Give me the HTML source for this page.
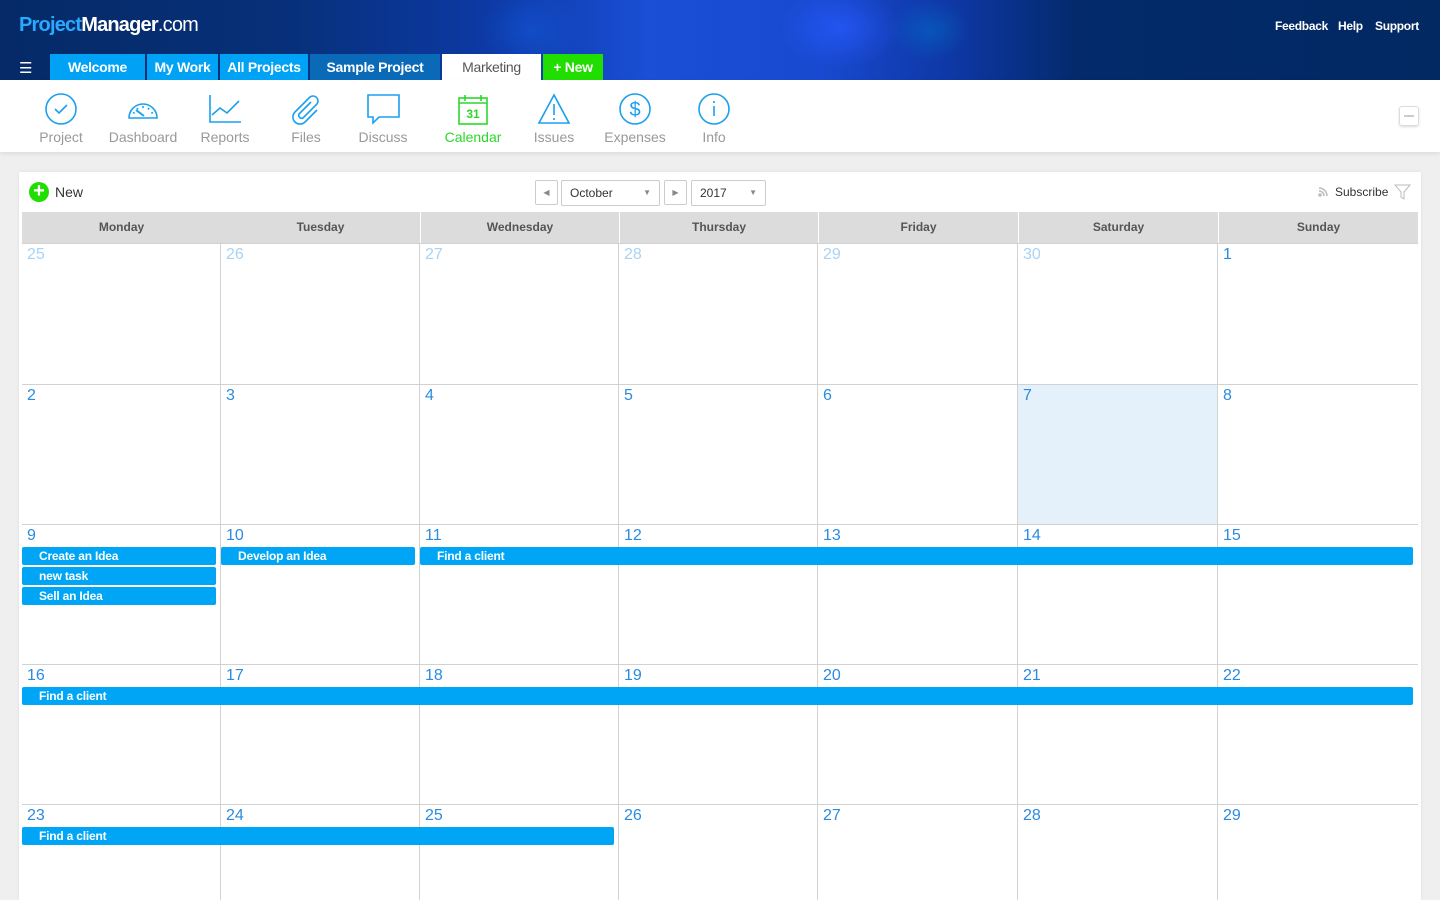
<!DOCTYPE html>
<html><head><meta charset="utf-8"><style>
*{margin:0;padding:0;box-sizing:border-box}
html,body{width:1440px;height:900px;overflow:hidden}
body{background:#efefef;font-family:"Liberation Sans",sans-serif;position:relative}
.a{position:absolute}
#hdr{left:0;top:0;width:1440px;height:80px;background:
radial-gradient(ellipse 60px 40px at 840px 28px,rgba(40,90,255,.7),transparent),
radial-gradient(ellipse 40px 30px at 930px 30px,rgba(0,110,200,.5),transparent),
radial-gradient(ellipse 50px 40px at 530px 30px,rgba(20,90,220,.5),transparent),
linear-gradient(90deg,#052a66 0%,#07307a 20%,#0d3aa8 35%,#1a4fd6 45%,#1849d0 57%,#0d36a0 67%,#032a6a 75%,#022962 100%)}
.tab{top:54px;height:26px;color:#fff;font-size:14px;font-weight:bold;text-align:center;line-height:26px;letter-spacing:-0.3px}
.tl{top:93px;width:80px;text-align:center}
.tl svg{display:block;margin:0 auto}
.tl div{font-size:14px;color:#999;margin-top:4px}
.dh{top:212px;height:31px;background:#dcdcdc;font-size:12px;font-weight:bold;color:#555;text-align:center;line-height:31px}
.cell{border-left:1px solid #d2d2d2;border-top:1px solid #d2d2d2}
.dn{font-size:16px;color:#2b8be0;padding:2px 0 0 5px}
.f .dn{color:#a9d3f4}
.ev{height:18px;background:#00a6f5;color:#fff;font-size:12px;font-weight:bold;line-height:18px;padding-left:17px;border-radius:2px;letter-spacing:-0.2px}
.hl{top:19px;font-size:12px;font-weight:bold;color:#fff;letter-spacing:-0.3px}
</style></head><body>
<div id="hdr" class="a"></div>
<div class="a" style="left:19px;top:14px;font-size:20px;font-weight:bold;letter-spacing:-0.8px;color:#fff"><span style="color:#2aa8ff">Project</span>Manager<span style="font-weight:normal">.com</span></div>
<div class="a hl" style="left:1275px">Feedback</div>
<div class="a hl" style="left:1338px">Help</div>
<div class="a hl" style="left:1375px">Support</div>
<div class="a" style="left:19px;top:59px;color:#fff;font-size:15px">&#9776;</div>
<div class="a tab" style="left:50px;width:95px;background:#00a2f5">Welcome</div>
<div class="a tab" style="left:147px;width:71px;background:#00a2f5">My Work</div>
<div class="a tab" style="left:220px;width:88px;background:#00a2f5">All Projects</div>
<div class="a tab" style="left:310px;width:130px;background:#0a6ab8">Sample Project</div>
<div class="a tab" style="left:442px;width:99px;background:#fff;color:#555;font-weight:normal">Marketing</div>
<div class="a tab" style="left:543px;width:60px;background:#22dd00">+ New</div>
<div class="a" style="left:0;top:80px;width:1440px;height:72px;background:#fff;box-shadow:0 2px 4px rgba(0,0,0,.08)"></div>
<div class="a tl" style="left:21px"><svg width="34" height="32" viewBox="0 0 34 32" fill="none" stroke="#1aa0ef" stroke-width="1.6"><circle cx="17" cy="16" r="15"/><path d="M11 16l4 4 8-8"/></svg><div>Project</div></div>
<div class="a tl" style="left:103px"><svg width="34" height="32" viewBox="0 0 34 32" fill="none" stroke="#1aa0ef" stroke-width="1.6"><path d="M3 25a14 14 0 0 1 28 0z"/><path d="M10 17l8 6" stroke-width="2"/><path d="M17 13v2M11 15l1 1.5M23 15l-1 1.5M7 19.5l1.7.7M27 19.5l-1.7.7"/></svg><div>Dashboard</div></div>
<div class="a tl" style="left:185px"><svg width="34" height="32" viewBox="0 0 34 32" fill="none" stroke="#1aa0ef" stroke-width="1.6"><path d="M2 2v27h31"/><path d="M4 22l8-7 7 5 12-12"/></svg><div>Reports</div></div>
<div class="a tl" style="left:266px"><svg width="34" height="32" viewBox="0 0 34 32" fill="none" stroke="#1aa0ef" stroke-width="1.6"><path d="M22 9L10 21a3 3 0 0 0 4 4L28 11a5 5 0 0 0-7-7L6 19a7 7 0 0 0 10 10l12-12"/></svg><div>Files</div></div>
<div class="a tl" style="left:343px"><svg width="34" height="32" viewBox="0 0 34 32" fill="none" stroke="#1aa0ef" stroke-width="1.6"><path d="M2 2h31v22H13l-6 6v-6H2z"/></svg><div>Discuss</div></div>
<div class="a tl" style="left:433px"><svg width="34" height="32" viewBox="0 0 34 32" fill="none" stroke="#2bd82b" stroke-width="1.6"><rect x="3" y="5" width="28" height="26"/><path d="M3 10h28M9 2v6M25 2v6"/><text x="17" y="25" text-anchor="middle" font-size="12" font-weight="bold" fill="#2bd82b" stroke="none" font-family="Liberation Sans">31</text></svg><div style="color:#2bd82b">Calendar</div></div>
<div class="a tl" style="left:514px"><svg width="34" height="32" viewBox="0 0 34 32" fill="none" stroke="#1aa0ef" stroke-width="1.6"><path d="M17 2L2 30h30z"/><path d="M17 11v11M17 25v2"/></svg><div>Issues</div></div>
<div class="a tl" style="left:595px"><svg width="34" height="32" viewBox="0 0 34 32" fill="none" stroke="#1aa0ef" stroke-width="1.6"><circle cx="17" cy="16" r="15"/><text x="17" y="23" text-anchor="middle" font-size="20" fill="#1aa0ef" stroke="none" font-family="Liberation Sans">$</text></svg><div>Expenses</div></div>
<div class="a tl" style="left:674px"><svg width="34" height="32" viewBox="0 0 34 32" fill="none" stroke="#1aa0ef" stroke-width="1.6"><circle cx="17" cy="16" r="15"/><path d="M17 13v10M17 8v2"/></svg><div>Info</div></div>
<div class="a" style="left:1399px;top:106px;width:20px;height:20px;border:1px solid #ddd;border-radius:3px;box-shadow:0 1px 2px rgba(0,0,0,.15)"><div style="margin:8px 4px;height:2px;background:#ccc"></div></div>
<div class="a" style="left:19px;top:172px;width:1402px;height:728px;background:#fff;box-shadow:0 0 3px rgba(0,0,0,.08)"></div>
<div class="a" style="left:29px;top:182px;width:20px;height:20px;border-radius:50%;background:#22dd00;color:#fff;font-size:20px;line-height:19px;text-align:center;font-weight:bold">+</div>
<div class="a" style="left:55px;top:184px;font-size:14px;color:#333">New</div>
<div class="a" style="left:535px;top:180px;width:23px;height:25px;border:1px solid #ccc;border-radius:2px;font-size:8px;color:#888;text-align:center;line-height:23px">&#9664;</div>
<div class="a" style="left:561px;top:180px;width:99px;height:26px;border:1px solid #ccc;border-radius:2px;font-size:12px;color:#333;line-height:24px;padding-left:8px">October<span style="position:absolute;right:8px;font-size:8px;color:#888">&#9660;</span></div>
<div class="a" style="left:664px;top:180px;width:23px;height:25px;border:1px solid #ccc;border-radius:2px;font-size:8px;color:#888;text-align:center;line-height:23px">&#9654;</div>
<div class="a" style="left:691px;top:180px;width:75px;height:26px;border:1px solid #ccc;border-radius:2px;font-size:12px;color:#333;line-height:24px;padding-left:8px">2017<span style="position:absolute;right:8px;font-size:8px;color:#888">&#9660;</span></div>
<svg class="a" style="left:1318px;top:186px" width="11" height="11" viewBox="0 0 11 11" fill="none" stroke="#bbb" stroke-width="1.5"><path d="M1 2a8 8 0 0 1 8 8M1 5a5 5 0 0 1 5 5"/><circle cx="2" cy="9" r="1" fill="#bbb"/></svg>
<div class="a" style="left:1335px;top:185px;font-size:12px;color:#333">Subscribe</div>
<svg class="a" style="left:1394px;top:184px" width="17" height="16" viewBox="0 0 17 16" fill="none" stroke="#bbb"><path d="M1 1h15l-6 7v7l-3-2V8z"/></svg>
<div class="a dh" style="left:22px;width:199px">Monday</div>
<div class="a dh" style="left:221px;width:199px">Tuesday</div>
<div class="a dh" style="left:420px;width:199px;border-left:1px solid #fff">Wednesday</div>
<div class="a dh" style="left:619px;width:199px;border-left:1px solid #fff">Thursday</div>
<div class="a dh" style="left:818px;width:200px;border-left:1px solid #fff">Friday</div>
<div class="a dh" style="left:1018px;width:200px;border-left:1px solid #fff">Saturday</div>
<div class="a dh" style="left:1218px;width:200px;border-left:1px solid #fff">Sunday</div>
<div id="grid"></div>
<script>
var L=[22,220,419,618,817,1017,1217,1418],T=[243,384,524,664,804,900];
var d=[[25,26,27,28,29,30,1],[2,3,4,5,6,7,8],[9,10,11,12,13,14,15],[16,17,18,19,20,21,22],[23,24,25,26,27,28,29]];
var h='';
for(var r=0;r<5;r++)for(var c=0;c<7;c++){
var f=r==0&&c<6,bg=(r==1&&c==5)?'background:#e4f1fb;':'';
h+='<div class="a cell'+(f?' f':'')+'" style="'+bg+'left:'+L[c]+'px;top:'+T[r]+'px;width:'+(L[c+1]-L[c])+'px;height:'+(T[r+1]-T[r])+'px;'+(c==0?'border-left:none;':'')+'"><div class="dn">'+d[r][c]+'</div></div>';}
var ev=[[22,547,194,'Create an Idea'],[22,567,194,'new task'],[22,587,194,'Sell an Idea'],[221,547,194,'Develop an Idea'],[420,547,993,'Find a client'],[22,687,1391,'Find a client'],[22,827,592,'Find a client']];
ev.forEach(function(e){h+='<div class="a ev" style="left:'+e[0]+'px;top:'+e[1]+'px;width:'+e[2]+'px">'+e[3]+'</div>';});
document.getElementById('grid').innerHTML=h;
</script>
</body></html>
